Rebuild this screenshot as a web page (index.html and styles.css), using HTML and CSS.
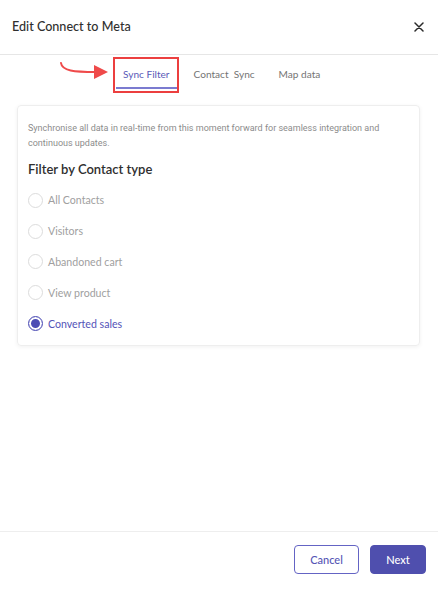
FILE: index.html
```html
<!DOCTYPE html>
<html lang="en">
<head>
<meta charset="utf-8">
<title>Edit Connect to Meta</title>
<link rel="stylesheet" href="styles.css">
</head>
<body>
<div class="modal">
  <header class="modal-header">
    <h1 class="modal-title">Edit Connect to Meta</h1>
    <button class="close-btn" aria-label="Close">
      <svg width="10" height="10" viewBox="0 0 10 10"><path d="M1 1L9 9M9 1L1 9" stroke="#2b2b2b" stroke-width="1.5" stroke-linecap="round"/></svg>
    </button>
  </header>

  <nav class="tabs">
    <div class="tab tab-active">
      <svg class="annot-arrow" width="52" height="24" viewBox="0 0 52 24">
        <path d="M3 3 C 4 11, 16 12, 38 12" fill="none" stroke="#ef4a4a" stroke-width="2" stroke-linecap="round"/>
        <path d="M36 5 L50 12 L36 19 Z" fill="#ef4a4a"/>
      </svg>
      <span class="annot-box"></span>
      Sync Filter
    </div>
    <div class="tab">Contact&nbsp; Sync</div>
    <div class="tab">Map data</div>
  </nav>

  <section class="card">
    <p class="desc">Synchronise all data in real-time from this moment forward for seamless integration and continuous updates.</p>
    <h2 class="card-heading">Filter by Contact type</h2>
    <ul class="radio-list">
      <li class="radio-row"><span class="radio"></span><span class="radio-label">All Contacts</span></li>
      <li class="radio-row"><span class="radio"></span><span class="radio-label">Visitors</span></li>
      <li class="radio-row"><span class="radio"></span><span class="radio-label">Abandoned cart</span></li>
      <li class="radio-row"><span class="radio"></span><span class="radio-label">View product</span></li>
      <li class="radio-row checked"><span class="radio"></span><span class="radio-label">Converted sales</span></li>
    </ul>
  </section>

  <div class="spacer"></div>

  <footer class="modal-footer">
    <button class="btn btn-outline">Cancel</button>
    <button class="btn btn-primary">Next</button>
  </footer>
</div>
</body>
</html>
```

FILE: styles.css
```css
* { box-sizing: border-box; }

html, body {
  margin: 0;
  padding: 0;
  background: #ffffff;
}

body {
  font-family: Lato, "Noto Sans", Arial, sans-serif;
  color: #333333;
}

.modal {
  width: 438px;
  height: 589px;
  display: flex;
  flex-direction: column;
  background: #fff;
}

.modal-header {
  height: 55px;
  display: flex;
  align-items: center;
  justify-content: space-between;
  padding: 0 13px 1px 12px;
  border-bottom: 1px solid #e6e6e6;
  flex-shrink: 0;
}

.modal-title {
  margin: 0;
  font-size: 12.6px;
  font-weight: 500;
  color: #2f2f2f;
}

.close-btn {
  border: 0;
  background: none;
  padding: 0;
  width: 12px;
  height: 12px;
  display: flex;
  align-items: center;
  justify-content: center;
  cursor: pointer;
}

.tabs {
  display: flex;
  justify-content: flex-start;
  gap: 10px;
  margin-top: 5px;
  padding-left: 116px;
  flex-shrink: 0;
}

.tab {
  position: relative;
  padding: 7px 7px 6px;
  font-size: 10.1px;
  line-height: 14px;
  color: #747474;
  border-bottom: 2px solid transparent;
  white-space: nowrap;
}

.tab-active {
  color: #5a5ab8;
  border-bottom-color: #7b7bd0;
}

.annot-box {
  position: absolute;
  left: -3px;
  right: -2px;
  top: -3px;
  bottom: -6px;
  border: 2px solid #ec3f3f;
}

.annot-arrow {
  position: absolute;
  left: -58px;
  top: 0px;
}

.card {
  margin: 16px 18px 0 17px;
  border: 1px solid #eeeeee;
  border-radius: 4px;
  box-shadow: 0 1px 4px rgba(0, 0, 0, 0.06);
  padding: 15px 14px 6px 10px;
  flex-shrink: 0;
}

.desc {
  margin: 0;
  font-family: Roboto, "Noto Sans", Arial, sans-serif;
  font-size: 9px;
  line-height: 15px;
  color: #8c8c8c;
  padding-right: 10px;
}

.card-heading {
  margin: 9px 0 0;
  font-size: 13px;
  line-height: 18px;
  font-weight: 600;
  color: #2f2f2f;
}

.radio-list {
  list-style: none;
  margin: 7px 0 0;
  padding: 0;
}

.radio-row {
  height: 30.8px;
  display: flex;
  align-items: center;
  gap: 5px;
}

.radio {
  width: 15px;
  height: 15px;
  border-radius: 50%;
  border: 1px solid #dcdcdc;
  background: #fff;
  flex-shrink: 0;
}

.radio-label {
  font-size: 10.6px;
  color: #a0a0a0;
}

.checked .radio {
  border: 1.5px solid #4d4db5;
  box-shadow: inset 0 0 0 2px #fff, inset 0 0 0 8px #4d4db5;
}

.checked .radio-label {
  color: #5353b8;
}

.spacer { flex: 1; }

.modal-footer {
  height: 58px;
  border-top: 1px solid #eeeeee;
  display: flex;
  justify-content: flex-end;
  align-items: flex-start;
  gap: 11px;
  padding: 13px 12px 0 0;
  flex-shrink: 0;
}

.btn {
  height: 29px;
  border-radius: 4px;
  font-family: Lato, "Noto Sans", Arial, sans-serif;
  font-size: 11px;
  font-weight: 500;
  cursor: pointer;
}

.btn-outline {
  width: 65px;
  background: #fff;
  border: 1px solid #6464c4;
  color: #5555b5;
}

.btn-primary {
  width: 56px;
  background: #4f4fae;
  border: 1px solid #4f4fae;
  color: #ffffff;
}
```
